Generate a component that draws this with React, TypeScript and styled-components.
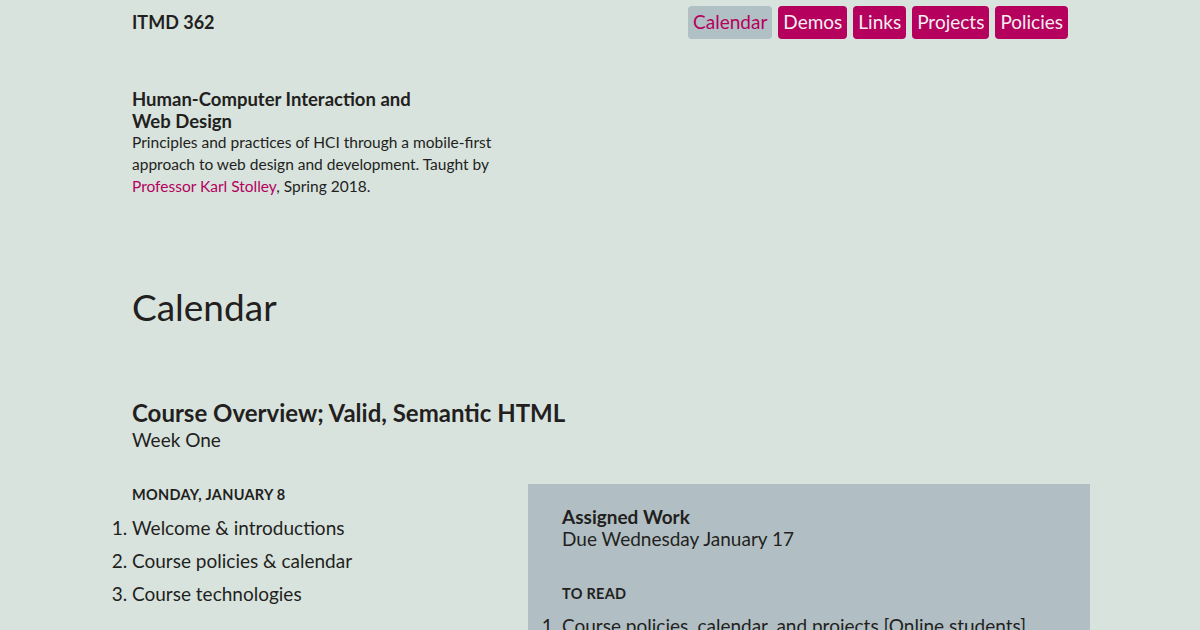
import styled, { createGlobalStyle } from "styled-components"

const GlobalStyle = createGlobalStyle`
  html, body {
    margin: 0;
    padding: 0;
    background: #d8e3de;
    color: #231f20;
    font-family: Lato, "Open Sans", sans-serif;
  }
`

const Page = styled.div`
  width: 1200px;
  height: 630px;
  overflow: hidden;
  background: #d8e3de;
`

const Header = styled.header`
  display: flex;
  justify-content: space-between;
  align-items: flex-start;
  padding: 6px 132px 0 132px;
`

const SiteName = styled.div`
  font-size: 18px;
  font-weight: 700;
  padding-top: 5px;
`

const Nav = styled.nav`
  display: flex;
  gap: 6px;
`

const NavLink = styled.a<{ $current?: boolean }>`
  display: block;
  height: 33px;
  line-height: 32px;
  padding: 0 5px;
  border-radius: 4px;
  font-size: 19px;
  text-decoration: none;
  background: ${(p) => (p.$current ? "#b1c0c4" : "#b5005d")};
  color: ${(p) => (p.$current ? "#b5005d" : "#f4eef1")};
`

const Intro = styled.section`
  width: 360px;
  padding: 49px 0 0 132px;
`

const IntroTitle = styled.h2`
  margin: 0;
  max-width: 320px;
  font-size: 18.5px;
  line-height: 22px;
  font-weight: 700;
`

const IntroText = styled.p`
  margin: -1px 0 0 0;
  font-size: 15.5px;
  line-height: 22px;
`

const Accent = styled.a`
  color: #b5005d;
  text-decoration: none;
`

const Main = styled.main`
  padding: 0 0 0 132px;
`

const PageTitle = styled.h1`
  margin: 87px 0 0 0;
  font-size: 37px;
  font-weight: 400;
  line-height: 46px;
`

const WeekTitle = styled.h2`
  margin: 69px 0 0 0;
  font-size: 24px;
  line-height: 28px;
  font-weight: 700;
`

const WeekSub = styled.p`
  margin: 0;
  font-size: 19px;
  line-height: 26px;
`

const WeekBody = styled.div`
  display: grid;
  grid-template-columns: 396px 562px;
  align-items: start;
  margin-top: 31px;
`

const DayHeading = styled.h3`
  margin: 2px 0 7px 0;
  font-size: 14.5px;
  letter-spacing: 0.3px;
  font-weight: 700;
  text-transform: uppercase;
  line-height: 18px;
`

const List = styled.ol`
  margin: 0;
  padding: 0;
  list-style-position: outside;
  font-size: 19px;
  line-height: 33px;
`

const Aside = styled.aside`
  background: #b1bfc4;
  padding: 22px 34px 20px 34px;
  height: 200px;
`

const AsideTitle = styled.h3`
  margin: 0;
  font-size: 19px;
  line-height: 22px;
  font-weight: 700;
`

const AsideSub = styled.p`
  margin: 0;
  font-size: 19px;
  line-height: 22px;
`

const AsideHeading = styled(DayHeading)`
  margin: 35px 0 6px 0;
`

export default function App() {
  return (
    <Page>
      <GlobalStyle />
      <Header>
        <SiteName>ITMD 362</SiteName>
        <Nav>
          <NavLink $current href="#">Calendar</NavLink>
          <NavLink href="#">Demos</NavLink>
          <NavLink href="#">Links</NavLink>
          <NavLink href="#">Projects</NavLink>
          <NavLink href="#">Policies</NavLink>
        </Nav>
      </Header>
      <Intro>
        <IntroTitle>Human-Computer Interaction and Web Design</IntroTitle>
        <IntroText>
          Principles and practices of HCI through a mobile-first approach to web design and
          development. Taught by <Accent href="#">Professor Karl Stolley</Accent>, Spring 2018.
        </IntroText>
      </Intro>
      <Main>
        <PageTitle>Calendar</PageTitle>
        <WeekTitle>Course Overview; Valid, Semantic HTML</WeekTitle>
        <WeekSub>Week One</WeekSub>
        <WeekBody>
          <div>
            <DayHeading>Monday, January 8</DayHeading>
            <List>
              <li>Welcome &amp; introductions</li>
              <li>Course policies &amp; calendar</li>
              <li>Course technologies</li>
            </List>
          </div>
          <Aside>
            <AsideTitle>Assigned Work</AsideTitle>
            <AsideSub>Due Wednesday January 17</AsideSub>
            <AsideHeading>To Read</AsideHeading>
            <List>
              <li>Course policies, calendar, and projects [Online students]</li>
            </List>
          </Aside>
        </WeekBody>
      </Main>
    </Page>
  )
}
